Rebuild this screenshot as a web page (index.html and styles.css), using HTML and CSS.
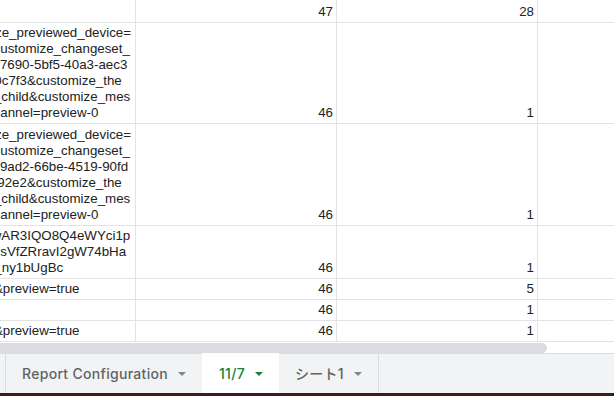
FILE: index.html
```html
<!DOCTYPE html>
<html lang="ja">
  <head>
    <meta charset="UTF-8" />
    <meta name="viewport" content="width=device-width, initial-scale=1.0" />
    <title>Hoja de cálculo</title>
    <link rel="stylesheet" href="styles.css">
  </head>
  <body>
    <main class="hoja">
      <!-- La hoja está desplazada a la derecha: la columna A se ve cortada -->
      <section class="celdas">
        <div class="fila f-22">
          <div class="c"></div><div class="c n">47</div><div class="c n">28</div><div class="c"></div>
        </div>
        <div class="fila f-100">
          <div class="c">
            <span>/?customize_previewed_device=</span>
            <span>desktop&amp;customize_changeset_</span>
            <span>uuid=c1a37690-5bf5-40a3-aec3</span>
            <span>-4b2e9d10c7f3&amp;customize_the</span>
            <span>me=astra_child&amp;customize_mes</span>
            <span>senger_channel=preview-0</span>
          </div>
          <div class="c n">46</div><div class="c n">1</div><div class="c"></div>
        </div>
        <div class="fila f-101">
          <div class="c">
            <span>/?customize_previewed_device=</span>
            <span>desktop&amp;customize_changeset_</span>
            <span>uuid=51c89ad2-66be-4519-90fd</span>
            <span>-f8c1ba0d92e2&amp;customize_the</span>
            <span>me=astra_child&amp;customize_mes</span>
            <span>senger_channel=preview-0</span>
          </div>
          <div class="c n">46</div><div class="c n">1</div><div class="c"></div>
        </div>
        <div class="fila f-52">
          <div class="c">
            <span>/?fbclid=IwAR3IQO8Q4eWYci1p</span>
            <span>Yx3Lm0kcsVfZRravI2gW74bHa</span>
            <span>aBk3Pxi8_ny1bUgBc</span>
          </div>
          <div class="c n">46</div><div class="c n">1</div><div class="c"></div>
        </div>
        <div class="fila f-20">
          <div class="c"><span>/?p=1234&amp;preview=true</span></div>
          <div class="c n">46</div><div class="c n">5</div><div class="c"></div>
        </div>
        <div class="fila f-20">
          <div class="c"></div><div class="c n">46</div><div class="c n">1</div><div class="c"></div>
        </div>
        <div class="fila f-20">
          <div class="c"><span>/?p=5678&amp;preview=true</span></div>
          <div class="c n">46</div><div class="c n">1</div><div class="c"></div>
        </div>
      </section>

      <div class="barra"><div></div></div>

      <nav class="pestanas">
        <div class="pestana">Report Configuration<span class="flecha"></span></div>
        <div class="pestana activa">11/7<span class="flecha"></span></div>
        <div class="pestana ultima">シート1<span class="flecha"></span></div>
      </nav>

      <div class="tareas"></div>
    </main>
  </body>
</html>
```

FILE: styles.css
```css
* {
  box-sizing: border-box;
}
body {
  margin: 0;
  overflow: hidden;
}
.hoja {
  width: 614px;
  height: 396px;
  overflow: hidden;
  display: flex;
  flex-direction: column;
  background: #fff;
}

/* Las celdas: la columna A empieza fuera de la pantalla */
.celdas {
  margin-left: -65px;
  flex: none;
}
.fila {
  display: grid;
  grid-template-columns: 201px 201px 201px 200px;
}
/* alto de cada fila contando el borde de abajo */
.f-22 { height: 23px; }
.f-100 { height: 101px; }
.f-101 { height: 102px; }
.f-52 { height: 53px; }
.f-20 { height: 21px; }

.c {
  border-right: 1px solid #e2e3e3;
  border-bottom: 1px solid #e2e3e3;
  padding: 0 3px 2px;
  /* el texto va pegado abajo, como en la hoja */
  display: flex;
  flex-direction: column;
  justify-content: flex-end;
  overflow: hidden;
  white-space: nowrap;
  font-family: "Liberation Sans", Arial, sans-serif;
  font-size: 13.33px;
  line-height: 16px;
  color: #222;
}
.c span {
  display: block;
}
.n {
  align-items: flex-end; /* números a la derecha */
}

/* Barra de desplazamiento horizontal */
.barra {
  flex: none;
  height: 11px;
  padding-top: 1px;
}
.barra div {
  width: 560px;
  margin-left: -13px;
  height: 10px;
  border-radius: 5px;
  background: #dadce0;
}

/* Pestañas de abajo */
.pestanas {
  flex: none;
  height: 40px;
  display: flex;
  padding-left: 5px;
  background: #f1f3f4;
  box-shadow: inset 0 1px #dadce0;
}
.pestana {
  display: flex;
  align-items: center;
  gap: 10px;
  padding: 0 16px;
  font-family: Inter, "Noto Sans CJK JP", sans-serif;
  font-weight: 500;
  font-size: 14px;
  letter-spacing: 0.3px;
  color: #5f6368;
  border-left: 1px solid #dadce0;
}
.pestana .flecha {
  border-left: 4px solid transparent;
  border-right: 4px solid transparent;
  border-top: 4px solid #80868b;
  margin-top: 1px;
}
.pestana.activa {
  background: #fff;
  color: #188038;
  border-left-color: transparent;
}
.pestana.activa .flecha {
  border-top-color: #188038;
}
.pestana.ultima {
  border-left: none;
  border-right: 1px solid #dadce0;
}

.tareas {
  flex: none;
  height: 3px;
  background: #3a1c1c;
}
```
